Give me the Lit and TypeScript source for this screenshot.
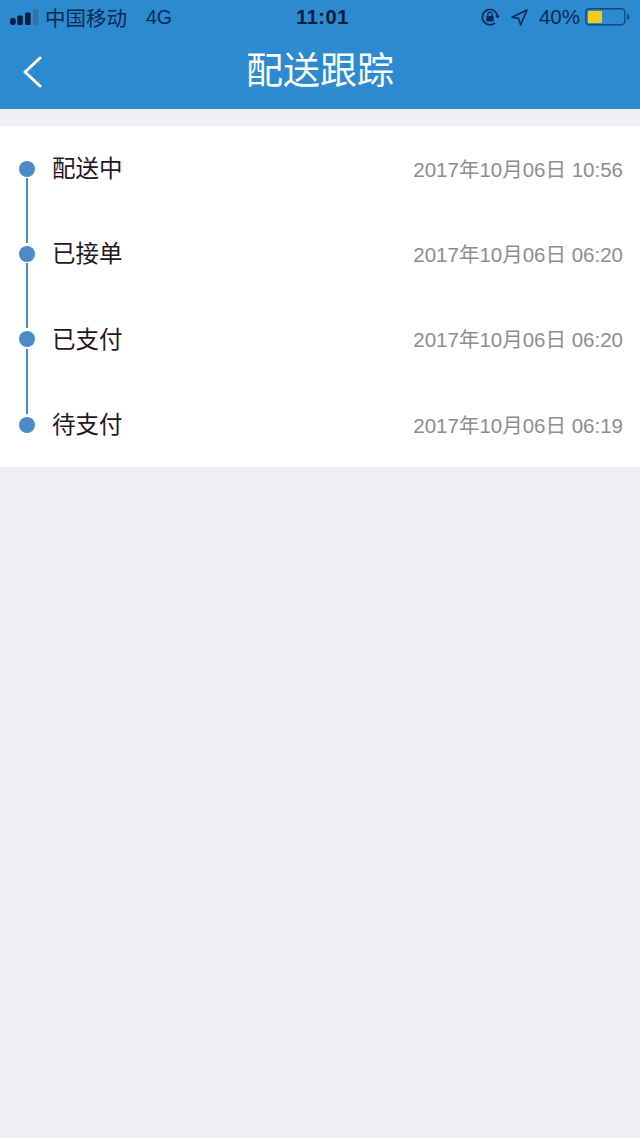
import { LitElement, html, css } from "lit";
import { customElement } from "lit/decorators.js";

const rows = [
  { label: "配送中", time: "2017年10月06日 10:56" },
  { label: "已接单", time: "2017年10月06日 06:20" },
  { label: "已支付", time: "2017年10月06日 06:20" },
  { label: "待支付", time: "2017年10月06日 06:19" },
];

@customElement("app-root")
export class AppRoot extends LitElement {
  static styles = css`
    :host {
      display: block;
      width: 640px;
      height: 1138px;
      background: #eeeef3;
      font-family: "Liberation Sans", "Noto Sans CJK SC", sans-serif;
      overflow: hidden;
    }
    .head {
      background: #2b8ad0;
      height: 109px;
      display: flex;
      flex-direction: column;
    }
    .status {
      height: 34px;
      display: grid;
      grid-template-columns: 1fr auto 1fr;
      align-items: center;
      color: #0c2a55;
      font-size: 20.5px;
      padding: 0 9px 0 10px;
    }
    .left, .right { display: flex; align-items: center; }
    .right { justify-content: flex-end; }
    .carrier { margin-left: 6px; }
    .net { margin-left: 19px; font-size: 19.5px; }
    .clock {
      font-weight: 700;
      font-size: 20px;
      color: #0a1f40;
      letter-spacing: 0.5px;
      padding-left: 4px;
    }
    .pct { font-size: 20.5px; margin: 0 5px 0 11px; }
    .rot { margin-right: 11px; }
    .nav {
      flex: 1;
      display: grid;
      grid-template-columns: 1fr auto 1fr;
      align-items: center;
    }
    .title { color: #fff; font-size: 37px; line-height: 46px; }
    .back { display: block; margin-left: 22px; }
    .card {
      margin-top: 17px;
      background: #fff;
      height: 341px;
    }
    .row {
      height: 85.3px;
      display: flex;
      align-items: center;
      padding: 0 17px 0 18.5px;
      box-sizing: border-box;
      position: relative;
    }
    .dot {
      width: 16px;
      height: 16px;
      border-radius: 50%;
      background: #4a8cca;
      flex: none;
    }
    .line {
      position: absolute;
      left: 26px;
      top: 52px;
      height: 65px;
      width: 1.5px;
      background: #4a8cca;
    }
    .label {
      margin-left: 17.5px;
      padding-bottom: 3px;
      font-size: 23.5px;
      color: #24161f;
      flex: 1;
    }
    .time {
      padding-bottom: 2px;
      font-size: 20.5px;
      color: #8e8e8e;
    }
  `;

  render() {
    return html`
      <div class="head">
        <div class="status">
          <div class="left">
            <svg width="29" height="18" viewBox="0 0 29 18">
              <rect x="0" y="10" width="5.8" height="7" rx="2.4" fill="#0a1f40" />
              <rect x="7.3" y="7.5" width="5.5" height="9.5" rx="1.5" fill="#0a1f40" />
              <rect x="15" y="4.5" width="5.6" height="12.5" rx="1.5" fill="#0a1f40" />
              <rect x="23" y="1" width="5.2" height="16" rx="1.5" fill="#3b6f9f" />
            </svg>
            <span class="carrier">中国移动</span><span class="net">4G</span>
          </div>
          <div class="clock">11:01</div>
          <div class="right">
            <svg class="rot" width="20" height="20" viewBox="0 0 20 20" fill="none">
              <path d="M17.5 9.5A7.6 7.6 0 1 0 15 15.8" stroke="#0c2a55" stroke-width="1.7" />
              <path d="M15 8.5h5l-2.5 3z" fill="#0c2a55" />
              <rect x="6.3" y="9" width="7.4" height="5.6" rx="0.8" fill="#0c2a55" />
              <path d="M7.8 9V7.4a2.2 2.2 0 0 1 4.4 0V9" stroke="#0c2a55" stroke-width="1.3" />
            </svg>
            <svg width="17" height="17" viewBox="0 0 17 17" fill="none">
              <path d="M16 1 1 8.2l6.6 1.2L9.6 16z" stroke="#0c2a55" stroke-width="1.6" stroke-linejoin="round" />
            </svg>
            <span class="pct">40%</span>
            <svg width="46" height="18" viewBox="0 0 46 18" fill="none">
              <rect x="0.8" y="0.8" width="39" height="16" rx="3.5" stroke="#0c4a80" stroke-width="1.4" />
              <rect x="3" y="3" width="14" height="12" rx="1" fill="#f6cb16" />
              <path d="M42 6c1.6.4 2.4 1.5 2.4 3s-.8 2.6-2.4 3z" fill="#0c4a80" />
            </svg>
          </div>
        </div>
        <div class="nav">
          <svg class="back" width="22" height="32" viewBox="0 0 22 32" fill="none">
            <path d="M18 2 3 16l15 14" stroke="#fff" stroke-width="3" stroke-linecap="round" stroke-linejoin="round" />
          </svg>
          <div class="title">配送跟踪</div>
          <div></div>
        </div>
      </div>
      <div class="card">
        ${rows.map(
          (r, i) => html`
            <div class="row">
              <div class="dot"></div>
              ${i < rows.length - 1 ? html`<div class="line"></div>` : ""}
              <div class="label">${r.label}</div>
              <div class="time">${r.time}</div>
            </div>
          `
        )}
      </div>
    `;
  }
}
